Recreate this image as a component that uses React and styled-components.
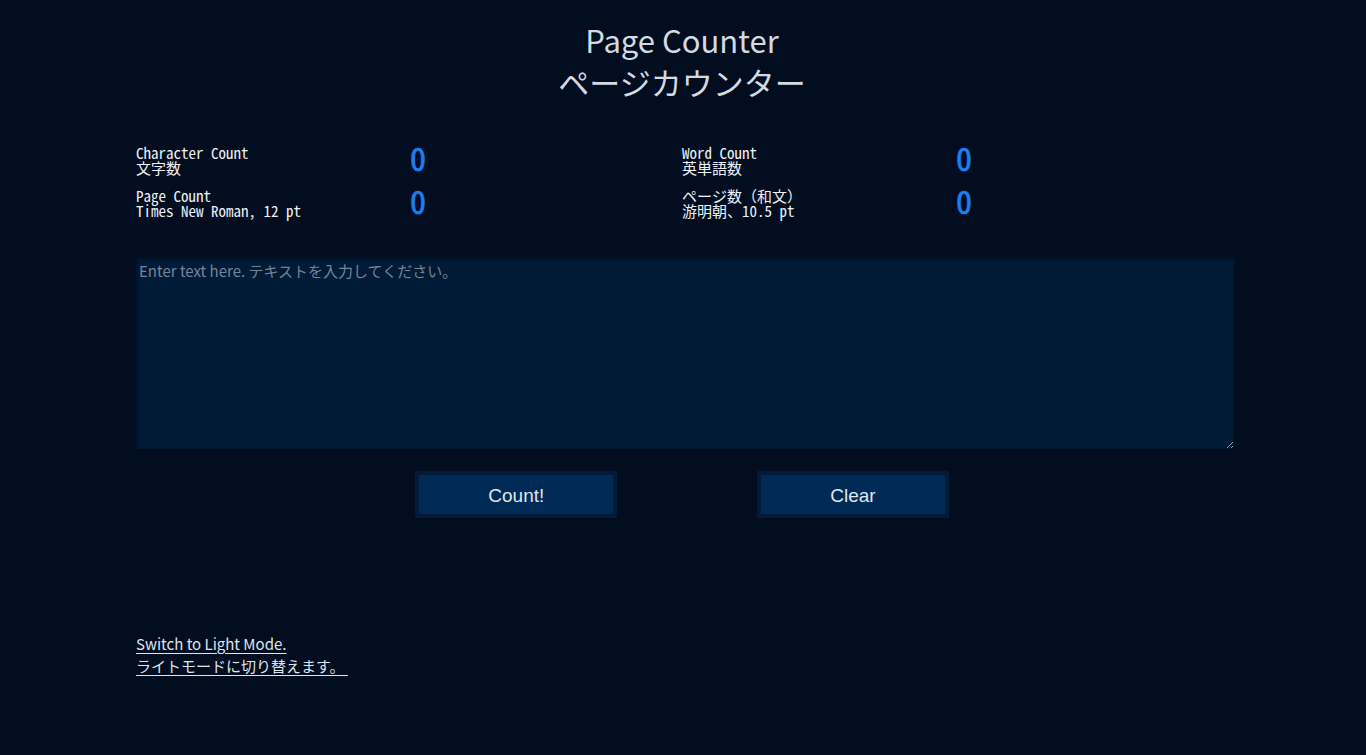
import React, { useState } from "react";
import styled, { createGlobalStyle } from "styled-components";

const Global = createGlobalStyle`
  html, body { margin: 0; padding: 0; background: #020d1f; }
  body { min-height: 755px; font-family: "Noto Sans CJK JP", "Noto Sans", sans-serif; color: #d6dce3; }
`;

const Page = styled.div`
  width: 1092px;
  margin-left: 136px;
  padding-top: 19px;
  display: flex;
  flex-direction: column;
`;

const Title = styled.h1`
  margin: 0;
  font-family: "Noto Sans CJK JP", "Noto Sans", sans-serif;
  font-weight: 400;
  font-size: 31px;
  line-height: 42px;
  text-align: center;
  color: #d4dae1;
`;

const Stats = styled.div`
  margin-top: 42px;
  display: grid;
  grid-template-columns: repeat(4, 273px);
  row-gap: 13px;
  align-items: center;
`;

const Label = styled.div`
  font-family: "Noto Sans Mono CJK JP", "DejaVu Sans Mono", monospace;
  font-size: 15px;
  line-height: 15px;
  color: #eef2f6;
  white-space: pre;
`;

const Num = styled.div`
  font-family: "Noto Sans Mono CJK JP", "DejaVu Sans Mono", monospace;
  font-size: 32px;
  font-weight: 400;
  -webkit-text-stroke: 0.7px #1a80f0;
  line-height: 30px;
  height: 30px;
  color: #1a80f0;
  padding-left: 1px;
  margin-top: -6px;
`;

const Area = styled.textarea`
  margin-top: 39px;
  width: 1098px;
  height: 192px;
  box-sizing: border-box;
  border: none;
  outline: none;
  padding: 3px 3px;
  background: #011a36;
  box-shadow: inset 1px 2px 3px rgba(0, 0, 0, 0.35);
  color: #d6dce3;
  font-family: "Noto Sans CJK JP", "Noto Sans", sans-serif;
  font-size: 15px;
  line-height: 22px;
  &::placeholder { color: #71859b; }
`;

const Buttons = styled.div`
  margin-top: 22px;
  display: flex;
  justify-content: center;
  gap: 140px;
`;

const Button = styled.button`
  box-sizing: border-box;
  height: 47px;
  padding: 2px ${(p) => p.$pad}px 0;
  border: 4px solid #031a38;
  background: #012b57;
  color: #dfe6ee;
  font-family: "Liberation Sans", Arial, sans-serif;
  font-size: 19px;
  cursor: pointer;
`;

const Links = styled.div`
  margin-top: 115px;
  display: flex;
  flex-direction: column;
  align-items: flex-start;
`;

const Link = styled.a`
  font-family: "Noto Sans CJK JP", "Noto Sans", sans-serif;
  font-size: 15px;
  line-height: 22px;
  color: #dfe5ec;
  text-decoration: underline;
  text-underline-offset: 3px;
  white-space: pre;
  cursor: pointer;
`;

const stats = [
  ["Character Count\n文字数", "Word Count\n英単語数"],
  ["Page Count\nTimes New Roman, 12 pt", "ページ数（和文）\n游明朝、10.5 pt"],
];

export default function App() {
  const [text, setText] = useState("");
  return (
    <>
      <Global />
      <Page>
        <Title>
          Page Counter
          <br />
          ページカウンター
        </Title>
        <Stats>
          {stats.map((row, i) => (
            <React.Fragment key={i}>
              <Label>{row[0]}</Label>
              <Num>0</Num>
              <Label>{row[1]}</Label>
              <Num>0</Num>
            </React.Fragment>
          ))}
        </Stats>
        <Area
          value={text}
          onChange={(e) => setText(e.target.value)}
          placeholder="Enter text here. テキストを入力してください。"
        />
        <Buttons>
          <Button $pad={69}>Count!</Button>
          <Button $pad={69} onClick={() => setText("")}>Clear</Button>
        </Buttons>
        <Links>
          <Link>Switch to Light Mode.</Link>
          <Link>ライトモードに切り替えます。 </Link>
        </Links>
      </Page>
    </>
  );
}
